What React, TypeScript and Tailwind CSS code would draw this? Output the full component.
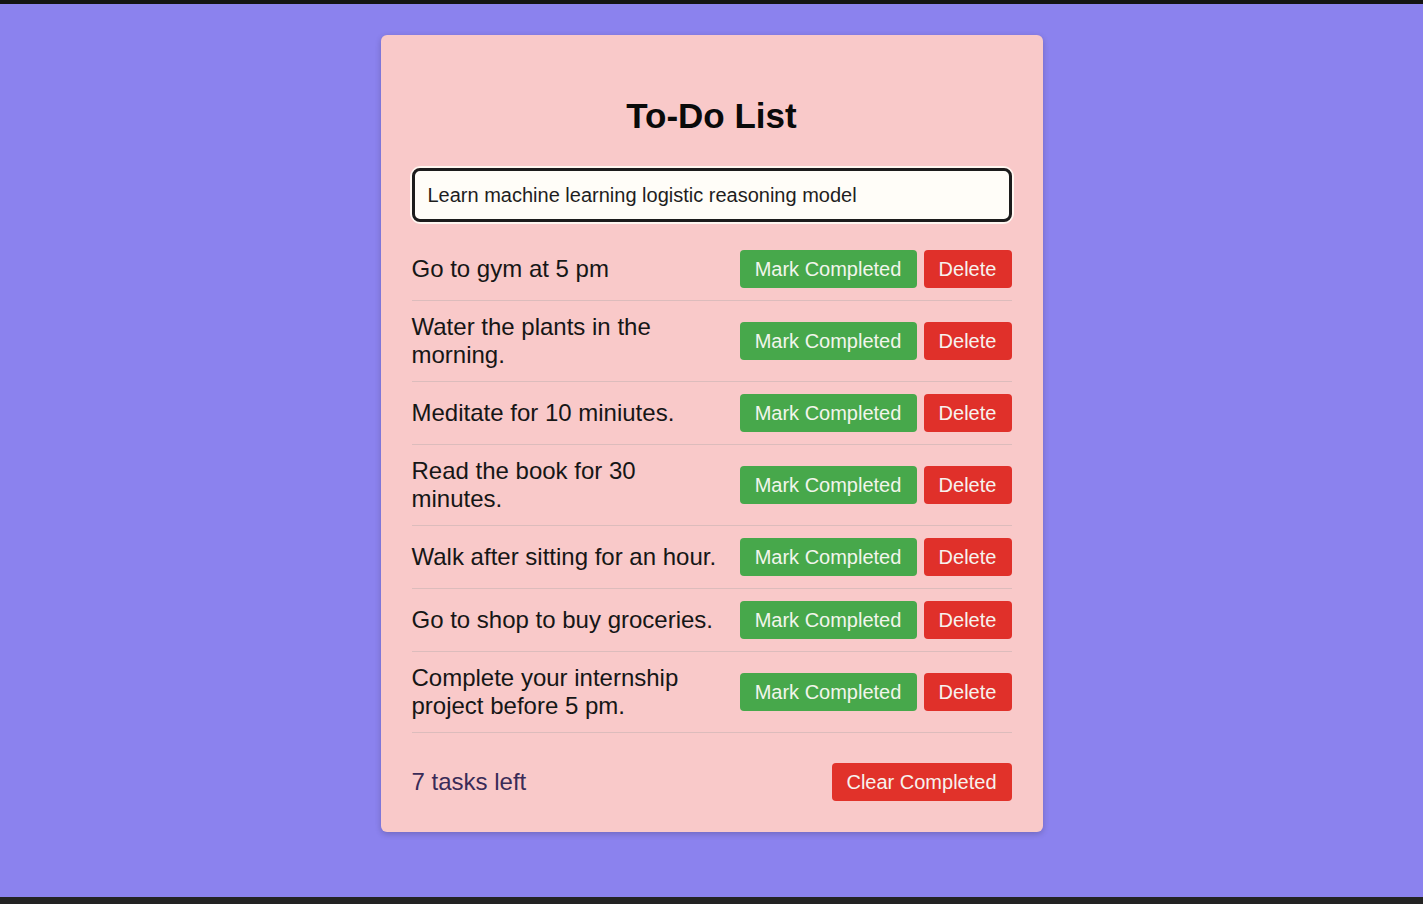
import React from "react";

const tasks = [
  "Go to gym at 5 pm",
  "Water the plants in the morning.",
  "Meditate for 10 miniutes.",
  "Read the book for 30 minutes.",
  "Walk after sitting for an hour.",
  "Go to shop to buy groceries.",
  "Complete your internship project before 5 pm.",
];

export default function App() {
  return (
    <div
      className="flex h-[904px] w-full flex-col bg-[#8b82ee]"
      style={{ fontFamily: '"Liberation Sans", Arial, sans-serif' }}
    >
      <div className="h-[4px] w-full bg-[#141414]" />
      <div className="flex flex-1 justify-center pt-[31px]">
        <div className="h-fit w-[662px] rounded-[6px] bg-[#f9c9c9] px-[31px] pb-[31px] pt-[61px] shadow-[0_2px_6px_rgba(0,0,0,0.2)]">
          <h1 className="text-center text-[35px] font-bold leading-[40px] text-[#0a0a0a]">
            To-Do List
          </h1>
          <div className="mt-[32px] rounded-[9px] ring-2 ring-[#fff6f0]">
            <input
              readOnly
              value="Learn machine learning logistic reasoning model"
              className="h-[54px] w-full rounded-[8px] border-[3px] border-[#1c1c1c] bg-[#fffdf8] pl-[13px] text-[20px] text-[#1e1e1e] outline-none"
            />
          </div>
          <ul className="mt-[16px]">
            {tasks.map((t) => (
              <li
                key={t}
                className="flex items-center gap-[14px] border-b border-[#dcbcbc] py-[12px]"
              >
                <span className="flex-1 text-[24px] leading-[28px] text-[#161616]">
                  {t}
                </span>
                <div className="flex gap-[7px]">
                  <button className="h-[38px] w-[177px] rounded-[4px] bg-[#47a84b] text-[20px] text-[#f2f5ec]">
                    Mark Completed
                  </button>
                  <button className="h-[38px] w-[88px] rounded-[4px] bg-[#e0302a] text-[20px] text-[#f7f2ee]">
                    Delete
                  </button>
                </div>
              </li>
            ))}
          </ul>
          <div className="mt-[30px] flex items-center justify-between">
            <span className="text-[24px] leading-[28px] text-[#3a2b57]">7 tasks left</span>
            <button className="h-[38px] w-[180px] rounded-[4px] bg-[#e1322a] text-[20px] text-[#f7f2ee]">
              Clear Completed
            </button>
          </div>
        </div>
      </div>
      <div className="h-[7px] w-full bg-[#232323]" />
    </div>
  );
}
